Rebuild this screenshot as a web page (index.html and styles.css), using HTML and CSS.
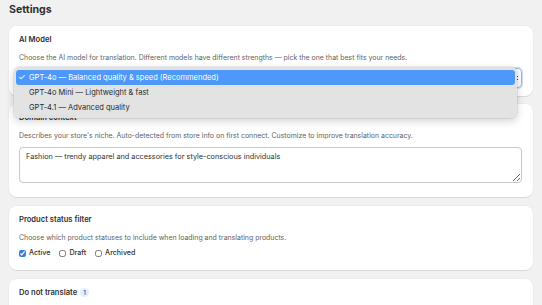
FILE: index.html
```html
<!DOCTYPE html>
<html lang="en">
<head>
    <meta charset="UTF-8">
    <title>Settings</title>
    <link rel="stylesheet" href="styles.css">
</head>
<body>
    <h1 class="page-title">Settings</h1>

    <div class="card card-model">
        <h2 class="card-title">AI Model</h2>
        <p class="card-desc">Choose the AI model for translation. Different models have different strengths — pick the one that best fits your needs.</p>
        <div class="select-wrap">
            <div class="select">
                <span class="select-value">GPT-4o — Balanced quality &amp; speed (Recommended)</span>
                <svg class="select-arrows" width="5" height="8" viewBox="0 0 5 8">
                    <path d="M1 3 L2.5 1.5 L4 3 M1 5 L2.5 6.5 L4 5" fill="none" stroke="#333" stroke-width="0.9"/>
                </svg>
            </div>
            <ul class="dropdown">
                <li class="option selected"><span class="check">✓</span>GPT-4o — Balanced quality &amp; speed (Recommended)</li>
                <li class="option"><span class="check"></span>GPT-4o Mini — Lightweight &amp; fast</li>
                <li class="option"><span class="check"></span>GPT-4.1 — Advanced quality</li>
            </ul>
        </div>
    </div>

    <div class="card card-domain">
        <h2 class="card-title">Domain context</h2>
        <p class="card-desc">Describes your store's niche. Auto-detected from store info on first connect. Customize to improve translation accuracy.</p>
        <textarea class="textarea">Fashion — trendy apparel and accessories for style-conscious individuals</textarea>
    </div>

    <div class="card card-status">
        <h2 class="card-title">Product status filter</h2>
        <p class="card-desc">Choose which product statuses to include when loading and translating products.</p>
        <div class="checks">
            <label class="check-item"><input type="checkbox" checked> Active</label>
            <label class="check-item"><input type="checkbox"> Draft</label>
            <label class="check-item"><input type="checkbox"> Archived</label>
        </div>
    </div>

    <div class="card card-dnt">
        <h2 class="card-title">Do not translate <span class="badge">1</span></h2>
    </div>
</body>
</html>
```

FILE: styles.css
```css
body {
    margin: 0;
    padding: 0 9px 0 9px;
    background-color: #f1f1f1;
    font-family: Inter, "Liberation Sans", Arial, sans-serif;
    color: #303030;
    overflow: hidden;
}
.page-title {
    margin: 0;
    padding-top: 3px;
    font-size: 10.6px;
    line-height: 14px;
    font-weight: 700;
    height: 23px;
}
.card {
    background: #fff;
    border-radius: 8px;
    box-shadow: 0 1px 0 rgba(0,0,0,0.08), 0 0 0 1px rgba(0,0,0,0.02);
    padding: 8px 11px 8px 10px;
    margin-bottom: 8px;
}
.card-title {
    margin: 0;
    font-size: 7.6px;
    line-height: 12px;
    font-weight: 600;
}
.card-desc {
    margin: 6px 0 0;
    font-size: 6.95px;
    line-height: 12px;
    color: #5f5f5f;
}
.select-wrap {
    position: relative;
    margin-top: 4px;
}
.select {
    height: 18px;
    border: 1px solid #9fb3e8;
    border-radius: 4px;
    box-shadow: 0 0 0 1px #d3ddf6;
    display: flex;
    align-items: center;
    justify-content: space-between;
    padding: 0 2px 0 8px;
    font-size: 7.5px;
}
.select-value {
    visibility: hidden;
}
.dropdown {
    position: absolute;
    top: -1px;
    left: -5px;
    width: 503px;
    margin: 0;
    padding: 3px 2px;
    list-style: none;
    background: rgba(226,226,226,0.97);
    border-radius: 5px;
    box-shadow: 0 3px 8px rgba(0,0,0,0.18), 0 0 0 0.5px rgba(0,0,0,0.12);
    box-sizing: border-box;
}
.option {
    height: 15px;
    line-height: 15px;
    font-size: 7.5px;
    color: #2a2a2a;
    display: flex;
    align-items: center;
    border-radius: 3px;
    padding-left: 2px;
}
.option.selected {
    background: #4d98f8;
    color: #fff;
}
.check {
    width: 11px;
    font-size: 8.5px;
}
.textarea {
    display: block;
    margin-top: 5px;
    width: 100%;
    height: 36px;
    box-sizing: border-box;
    border: 1px solid #c9c9c9;
    border-radius: 4px;
    padding: 4px 6px;
    font-family: inherit;
    font-size: 7.3px;
    color: #303030;
    resize: vertical;
}
.card-domain {
    padding-bottom: 14px;
}
.card-status {
    margin-top: 9px;
}
.checks {
    display: flex;
    gap: 9px;
    margin-top: 3px;
    padding-bottom: 3px;
}
.check-item {
    display: flex;
    align-items: center;
    gap: 3px;
    font-size: 7.1px;
    font-weight: 500;
    line-height: 12px;
}
.check-item input {
    margin: 0;
    width: 7px;
    height: 7px;
    accent-color: #3b7ddd;
}
.badge {
    display: inline-block;
    width: 9px;
    height: 9px;
    margin-left: 1px;
    border-radius: 5px;
    background: #e3eefc;
    color: #2563c9;
    font-size: 6px;
    line-height: 9px;
    text-align: center;
    vertical-align: 0;
}
.card-dnt {
    margin-top: 9px;
    height: 40px;
}
```
